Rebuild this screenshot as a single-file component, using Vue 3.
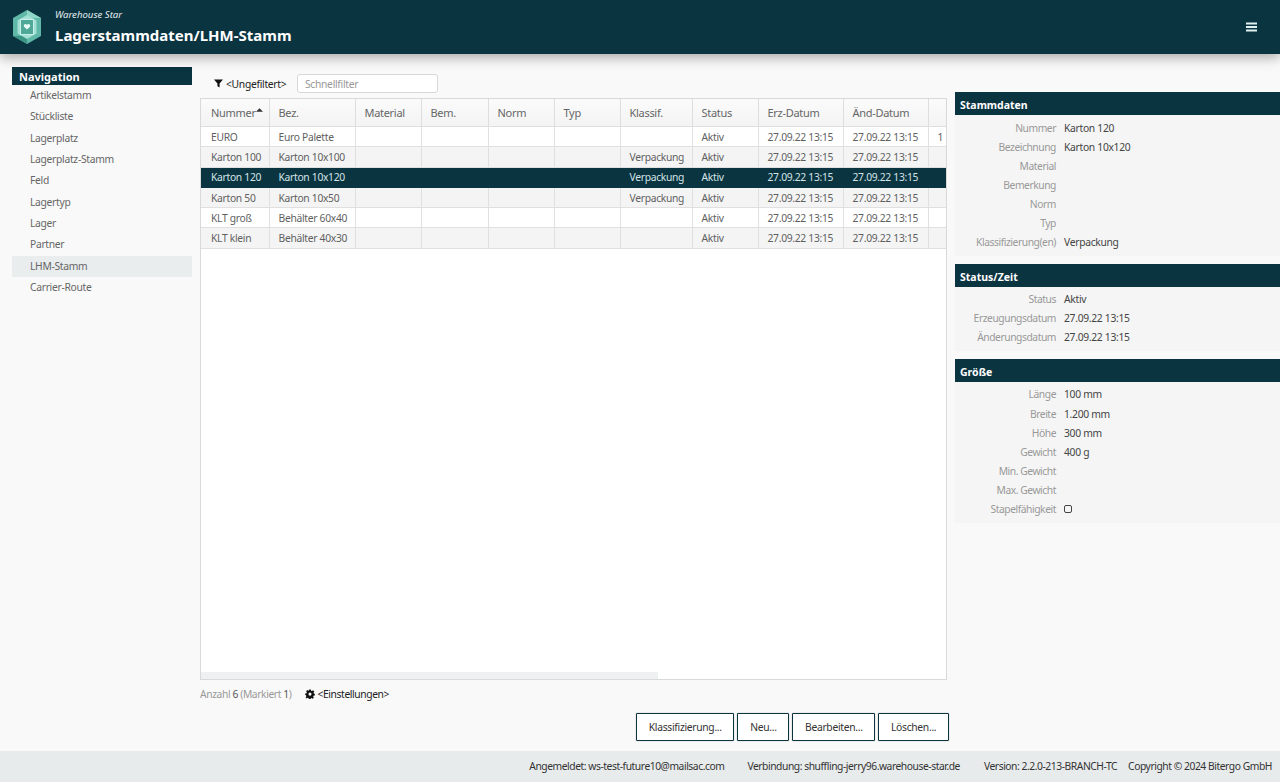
<template>
  <div class="page">
    <header class="topbar">
      <svg class="logo" viewBox="0 0 32 36" width="32" height="36">
        <polygon points="16,1 30,9 30,27 16,35 2,27 2,9" fill="#5fb8a8" />
        <polygon points="16,1 30,9 16,9" fill="#8ed6c8" />
        <polygon points="2,27 16,27 16,35" fill="#3c9484" />
        <polygon points="16,6 25.5,11.5 25.5,24.5 16,30 6.500,24.500 6.500,11.500" fill="#a4e0d4" />
        <rect x="9.500" y="10.500" width="13" height="15" fill="#4fa898" stroke="#c8efe8" stroke-width="1" />
        <path d="M16 20.500l-3-2.800a1.700 1.700 0 0 1 3-1.700a1.700 1.700 0 0 1 3 1.700z" fill="#e8fbf7" />
      </svg>
      <div class="titles">
        <div class="app-name">Warehouse Star</div>
        <div class="page-name">Lagerstammdaten/LHM-Stamm</div>
      </div>
      <svg class="burger" viewBox="0 0 11 10" width="11" height="10">
        <path d="M0 0.500h11v2h-11zM0 4h11v2h-11zM0 7.500h11v2h-11z" fill="#dff0f2" />
      </svg>
    </header>

    <div class="content">
      <aside class="nav">
        <div class="nav-title">Navigation</div>
        <ul>
          <li v-for="item in navItems" :key="item" :class="{ active: item === 'LHM-Stamm' }">{{ item }}</li>
        </ul>
      </aside>

      <main class="center">
        <div class="filterbar">
          <svg viewBox="0 0 10 10" width="9" height="9"><path d="M0 0.500h10l-3.800 4.500v4.500l-2.400-1.500v-3z" fill="#111" /></svg>
          <span class="filter-name">&lt;Ungefiltert&gt;</span>
          <input class="quick" placeholder="Schnellfilter" />
        </div>

        <div class="table-wrap">
          <table>
            <colgroup>
              <col v-for="w in colWidths" :key="w.id" :style="{ width: w.px + 'px' }" />
            </colgroup>
            <thead>
              <tr>
                <th v-for="h in headers" :key="h">
                  {{ h }}<svg v-if="h === 'Nummer'" class="sort" viewBox="0 0 8 4" width="7" height="4"><path d="M0 4l4-4 4 4z" fill="#333" /></svg>
                </th>
                <th></th>
              </tr>
            </thead>
            <tbody>
              <tr v-for="r in rows" :key="r.nr" :class="{ selected: r.nr === 'Karton 120' }">
                <td>{{ r.nr }}</td>
                <td>{{ r.bez }}</td>
                <td></td><td></td><td></td><td></td>
                <td>{{ r.kl }}</td>
                <td>Aktiv</td>
                <td>27.09.22 13:15</td>
                <td>27.09.22 13:15</td>
                <td>{{ r.extra }}</td>
              </tr>
            </tbody>
          </table>
          <div class="hscroll"></div>
        </div>

        <div class="tablefoot">
          <span class="count">Anzahl <b>6</b> (Markiert <b>1</b>)</span>
          <svg viewBox="0 0 24 24" width="10" height="10"><path fill="#111" fill-rule="evenodd" d="M10 1h4l.6 3.200 2 .8L19.400 3.200l2.800 2.800-1.800 2.800.8 2L23.500 11.500v4l-3.200.6-.8 2 1.800 2.700-2.800 2.800-2.800-1.800-2 .8-.6 2.400h-4l-.6-3.200-2-.8-2.700 1.800L1.500 20l1.800-2.800-.8-2L.5 14.500v-4l3.200-.6.800-2L2.700 5.200 5.500 2.400l2.800 1.800 1.100-.4zM12 8.500a3.700 3.700 0 1 0 0 7.400a3.700 3.700 0 0 0 0-7.400z" /></svg>
          <span class="settings">&lt;Einstellungen&gt;</span>
        </div>

        <div class="actions">
          <button v-for="b in buttons" :key="b">{{ b }}</button>
        </div>
      </main>

      <aside class="details">
        <section v-for="s in sections" :key="s.title">
          <h2>{{ s.title }}</h2>
          <dl>
            <div v-for="f in s.fields" :key="f[0]" class="field">
              <dt>{{ f[0] }}</dt>
              <dd>
                <span v-if="f[1] === 'check'" class="check"></span>
                <template v-else>{{ f[1] }}</template>
              </dd>
            </div>
          </dl>
        </section>
      </aside>
    </div>

    <footer class="statusbar">
      <span class="s1">Angemeldet: ws-test-future10@mailsac.com</span>
      <span class="s2">Verbindung: shuffling-jerry96.warehouse-star.de</span>
      <span class="s3">Version: 2.2.0-213-BRANCH-TC</span>
      <span class="s4">Copyright © 2024 Bitergo GmbH</span>
    </footer>
  </div>
</template>

<script setup>
const navItems = ['Artikelstamm', 'Stückliste', 'Lagerplatz', 'Lagerplatz-Stamm', 'Feld', 'Lagertyp', 'Lager', 'Partner', 'LHM-Stamm', 'Carrier-Route'];

const headers = ['Nummer', 'Bez.', 'Material', 'Bem.', 'Norm', 'Typ', 'Klassif.', 'Status', 'Erz-Datum', 'Änd-Datum'];

const colWidths = [68, 86, 66, 67, 66, 66, 72, 66, 85, 85, 60].map((px, id) => ({ id, px }));

const rows = [
  { nr: 'EURO', bez: 'Euro Palette', kl: '', extra: '1' },
  { nr: 'Karton 100', bez: 'Karton 10x100', kl: 'Verpackung', extra: '' },
  { nr: 'Karton 120', bez: 'Karton 10x120', kl: 'Verpackung', extra: '' },
  { nr: 'Karton 50', bez: 'Karton 10x50', kl: 'Verpackung', extra: '' },
  { nr: 'KLT groß', bez: 'Behälter 60x40', kl: '', extra: '' },
  { nr: 'KLT klein', bez: 'Behälter 40x30', kl: '', extra: '' },
];

const buttons = ['Klassifizierung...', 'Neu...', 'Bearbeiten...', 'Löschen...'];

const sections = [
  {
    title: 'Stammdaten',
    fields: [
      ['Nummer', 'Karton 120'],
      ['Bezeichnung', 'Karton 10x120'],
      ['Material', ''],
      ['Bemerkung', ''],
      ['Norm', ''],
      ['Typ', ''],
      ['Klassifizierung(en)', 'Verpackung'],
    ],
  },
  {
    title: 'Status/Zeit',
    fields: [
      ['Status', 'Aktiv'],
      ['Erzeugungsdatum', '27.09.22 13:15'],
      ['Änderungsdatum', '27.09.22 13:15'],
    ],
  },
  {
    title: 'Größe',
    fields: [
      ['Länge', '100 mm'],
      ['Breite', '1.200 mm'],
      ['Höhe', '300 mm'],
      ['Gewicht', '400 g'],
      ['Min. Gewicht', ''],
      ['Max. Gewicht', ''],
      ['Stapelfähigkeit', 'check'],
    ],
  },
];
</script>

<style>
html, body {
  margin: 0;
  background: #f9f9f9;
}
</style>

<style scoped>
* {
  box-sizing: border-box;
}

.page {
  height: 782px;
  display: flex;
  flex-direction: column;
  overflow: hidden;
  background: #f9f9f9;
  font-family: "Noto Sans", "Open Sans", sans-serif;
  font-size: 10.300px;
  letter-spacing: -0.3px;
  color: #333;
}

.topbar {
  height: 54px;
  flex: none;
  background: #0b3441;
  display: flex;
  align-items: center;
  padding: 0 24px 0 11px;
  box-shadow: 0 3px 12px rgba(0, 0, 0, 0.35);
  position: relative;
  z-index: 2;
}

.logo {
  flex: none;
}

.titles {
  margin-left: 12px;
  flex: 1;
  color: #fff;
}

.app-name {
  font-size: 9.600px;
  font-style: italic;
  letter-spacing: 0;
  line-height: 13px;
  color: #e4eef0;
}

.page-name {
  font-size: 15px;
  font-weight: 700;
  line-height: 22px;
  margin-top: 3px;
  letter-spacing: 0;
}

.burger {
  flex: none;
  margin-right: -1px;
}

.content {
  flex: 1;
  min-height: 0;
  display: flex;
  padding-left: 12px;
}

.nav {
  width: 180px;
  flex: none;
  padding-top: 13px;
}

.nav-title {
  height: 18px;
  background: #0b3441;
  color: #fff;
  font-weight: 700;
  font-size: 11px;
  line-height: 20px;
  padding-left: 7px;
  letter-spacing: 0;
}

.nav ul {
  list-style: none;
  margin: 0;
  padding: 0;
}

.nav li {
  height: 21.330px;
  line-height: 21px;
  padding-left: 18px;
  color: #666;
}

.nav li.active {
  background: #e9edee;
}

.center {
  width: 747px;
  flex: none;
  margin-left: 8px;
  display: flex;
  flex-direction: column;
}

.filterbar {
  height: 44px;
  display: flex;
  align-items: center;
  padding: 15px 0 0 14px;
}

.filter-name {
  margin-left: 3px;
  color: #222;
  width: 71px;
}

.quick {
  width: 141px;
  height: 19px;
  border: 1px solid #d8d8d8;
  border-radius: 3px;
  background: #fff;
  padding: 0 7px;
  font: inherit;
  letter-spacing: inherit;
  outline: none;
}

.quick::placeholder {
  color: #999;
}

.table-wrap {
  height: 582px;
  flex: none;
  background: #fff;
  border: 1px solid #d9d9d9;
  overflow: hidden;
  position: relative;
}

table {
  border-collapse: collapse;
  table-layout: fixed;
  width: 787px;
}

th {
  height: 27.500px;
  font-weight: 400;
  font-size: 11px;
  text-align: left;
  padding: 0 0 0 10px;
  color: #666;
  background: linear-gradient(#fbfbfb, #f3f3f3);
  border-right: 1px solid #dedede;
  border-bottom: 1px solid #dedede;
  white-space: nowrap;
}

td {
  height: 20.300px;
  padding: 0 0 0 10px;
  color: #5f5f5f;
  border-right: 1px solid #e0e0e0;
  border-bottom: 1px solid #e0e0e0;
  white-space: nowrap;
  overflow: hidden;
}

th + th,
td + td {
  padding-left: 9px;
}

tbody tr:nth-child(even) td {
  background: #f4f4f4;
}

tbody tr.selected td {
  background: #0b3441;
  color: #d4e4e8;
  border-color: #0b3441;
}

.sort {
  vertical-align: 5px;
}

.hscroll {
  position: absolute;
  left: 0;
  bottom: 0;
  width: 457px;
  height: 7px;
  background: #eef1f1;
}

.tablefoot {
  height: 28px;
  display: flex;
  align-items: center;
  color: #999;
  letter-spacing: -0.4px;
}

.count b {
  font-weight: 400;
  color: #555;
}

.tablefoot svg {
  margin-left: 13px;
}

.settings {
  margin-left: 3px;
  color: #222;
}

.actions {
  display: flex;
  justify-content: flex-end;
  gap: 3px;
  margin-top: 5px;
  margin-right: -2px;
}

.actions button {
  height: 28px;
  padding: 0 11.700px;
  background: #fff;
  border: 1px solid #0b3441;
  border-radius: 1px;
  font: inherit;
  letter-spacing: inherit;
  color: #333;
  box-shadow: inset 0 0 0 1px #fff, 0 0 1px #777;
}

.details {
  flex: 1;
  margin-left: 8px;
  padding-top: 38px;
  display: flex;
  flex-direction: column;
  gap: 8px;
}

.details h2 {
  margin: 0;
  height: 23px;
  background: #0b3441;
  color: #fff;
  font-size: 10.500px;
  font-weight: 700;
  line-height: 27px;
  padding-left: 5px;
  letter-spacing: 0;
}

.details dl {
  margin: 0;
  padding: 3px 0 4px;
  background: #f5f5f5;
}

.field {
  height: 19.100px;
  display: flex;
  align-items: center;
}

.field dt {
  width: 101px;
  text-align: right;
  color: #999;
  white-space: nowrap;
  letter-spacing: -0.45px;
}

.field dd {
  margin: 0 0 0 8px;
  color: #444;
}

.check {
  display: block;
  width: 8px;
  height: 8px;
  border: 1px solid #444;
  border-radius: 2px;
}

.statusbar {
  height: 31px;
  flex: none;
  background: #e8ebec;
  display: flex;
  align-items: center;
  justify-content: flex-end;
  padding: 0 8px 2px 0;
  color: #333;
  letter-spacing: -0.45px;
}

.s2 {
  margin-left: 23px;
}

.s3 {
  margin-left: 24px;
}

.s4 {
  margin-left: 11px;
}
</style>
